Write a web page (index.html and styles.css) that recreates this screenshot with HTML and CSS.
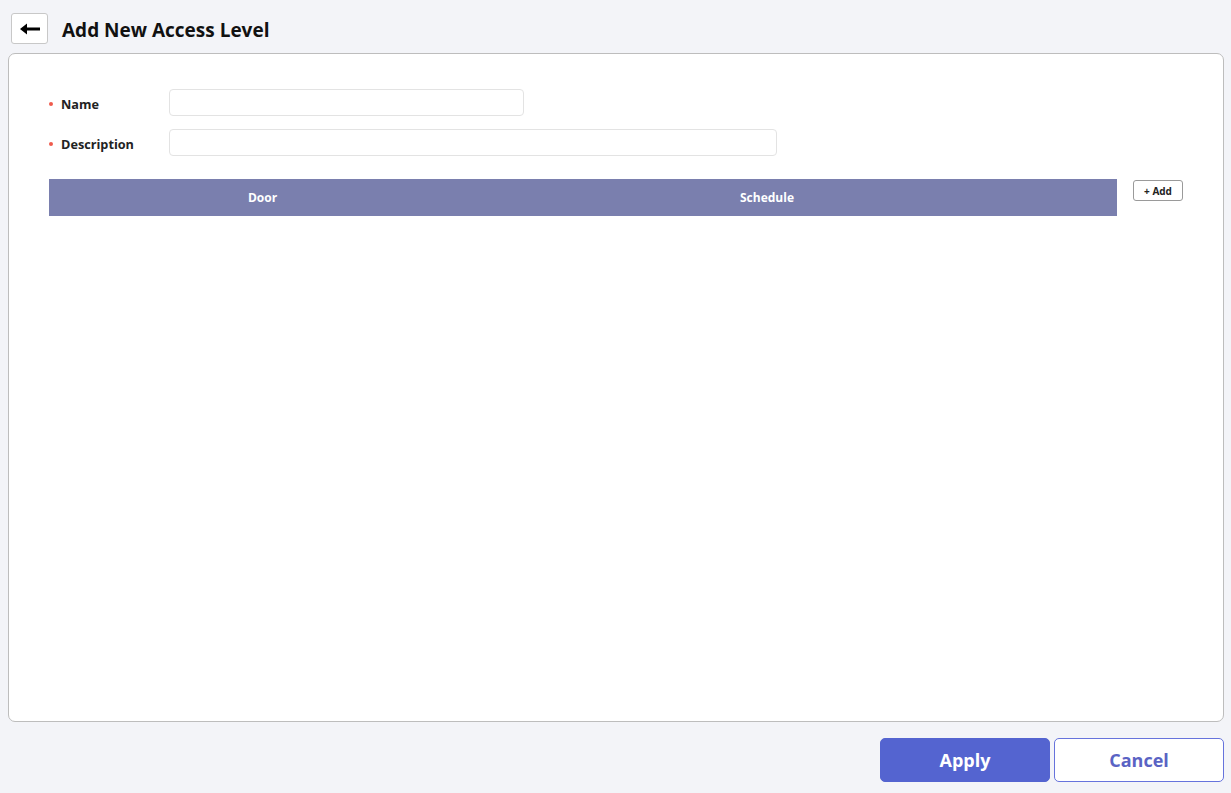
FILE: index.html
```html
<!DOCTYPE html>
<html lang="en">
<head>
  <meta charset="UTF-8" />
  <title>Add New Access Level</title>
  <link rel="stylesheet" href="styles.css">
</head>
<body>
  <div class="page">
    <div class="page-header">
      <button class="back-btn" type="button">
        <svg width="22" height="14" viewBox="0 0 22 14">
          <path d="M1 7 L8 1.5 L8 5.5 L21 5.5 L21 8.5 L8 8.5 L8 12.5 Z" fill="#000"/>
        </svg>
      </button>
      <h1>Add New Access Level</h1>
    </div>

    <div class="card">
      <div class="form-row">
        <label class="required">Name</label>
        <input type="text" class="input-name">
      </div>
      <div class="form-row">
        <label class="required">Description</label>
        <input type="text" class="input-desc">
      </div>

      <div class="table-area">
        <div class="table">
          <div class="table-head">
            <div class="col-door">Door</div>
            <div class="col-schedule">Schedule</div>
            <div class="col-action"></div>
          </div>
        </div>
        <button class="add-btn" type="button">+ Add</button>
      </div>
    </div>

    <div class="footer">
      <button class="apply-btn" type="button">Apply</button>
      <button class="cancel-btn" type="button">Cancel</button>
    </div>
  </div>
</body>
</html>
```

FILE: styles.css
```css
:root {
  --bg: #f3f4f8;
  --primary: #5464d0;
  --header: #7a7fae;
  --text-dark: #1b1b1b;
}
* {
  margin: 0;
  padding: 0;
  box-sizing: border-box;
  font-family: 'Open Sans', 'Noto Sans', sans-serif;
}
body {
  background: var(--bg);
  color: var(--text-dark);
}
.page {
  height: 100vh;
  display: flex;
  flex-direction: column;
  padding: 0 7px 0 8px;
}
.page-header {
  display: flex;
  align-items: center;
  gap: 14px;
  padding: 13px 3px 9px;
}
.back-btn {
  width: 37px;
  height: 31px;
  background: #fff;
  border: 1px solid #c8c8c8;
  border-radius: 3px;
  display: flex;
  align-items: center;
  justify-content: center;
  cursor: pointer;
}
.page-header h1 {
  font-size: 19px;
  font-weight: 700;
  color: #111;
  padding-top: 2px;
}
.card {
  flex: 1;
  background: #fff;
  border: 1px solid #bdbdbd;
  border-radius: 7px;
  padding: 35px 40px;
}
.form-row {
  display: flex;
  align-items: center;
  margin-bottom: 13px;
}
.form-row label {
  width: 120px;
  font-size: 12.7px;
  font-weight: 700;
  color: #222;
  position: relative;
  padding-left: 12px;
  padding-top: 2px;
}
.form-row label.required::before {
  content: "";
  position: absolute;
  left: 0;
  top: 50%;
  width: 4px;
  height: 4px;
  margin-top: -1px;
  border-radius: 50%;
  background: #ef5a4c;
}
.form-row input {
  height: 27px;
  border: 1px solid #e3e3e3;
  border-radius: 4px;
  padding: 0 8px;
  font-size: 13px;
  outline: none;
}
.input-name {
  width: 355px;
}
.input-desc {
  width: 608px;
}
.table-area {
  display: flex;
  align-items: flex-start;
  gap: 16px;
  margin-top: 23px;
}
.table {
  flex: 1;
}
.table-head {
  display: flex;
  height: 37px;
  align-items: center;
  background: var(--header);
  color: #fff;
  font-size: 12px;
  font-weight: 700;
  text-align: center;
}
.col-door {
  width: 427px;
}
.col-schedule {
  width: 582px;
}
.col-action {
  flex: 1;
}
.add-btn {
  width: 50px;
  height: 21px;
  margin-top: 1px;
  background: #fff;
  border: 1px solid #9a9a9a;
  border-radius: 3px;
  font-size: 10px;
  font-weight: 700;
  color: #222;
  cursor: pointer;
}
.footer {
  display: flex;
  justify-content: flex-end;
  gap: 4px;
  padding: 16px 0 11px;
}
.footer button {
  width: 170px;
  height: 44px;
  border-radius: 5px;
  font-size: 18px;
  font-weight: 700;
  cursor: pointer;
}
.apply-btn {
  background: var(--primary);
  border: 1px solid var(--primary);
  color: #fff;
}
.cancel-btn {
  background: #fff;
  border: 1px solid #6673dc;
  color: #5a63c4;
}
```
